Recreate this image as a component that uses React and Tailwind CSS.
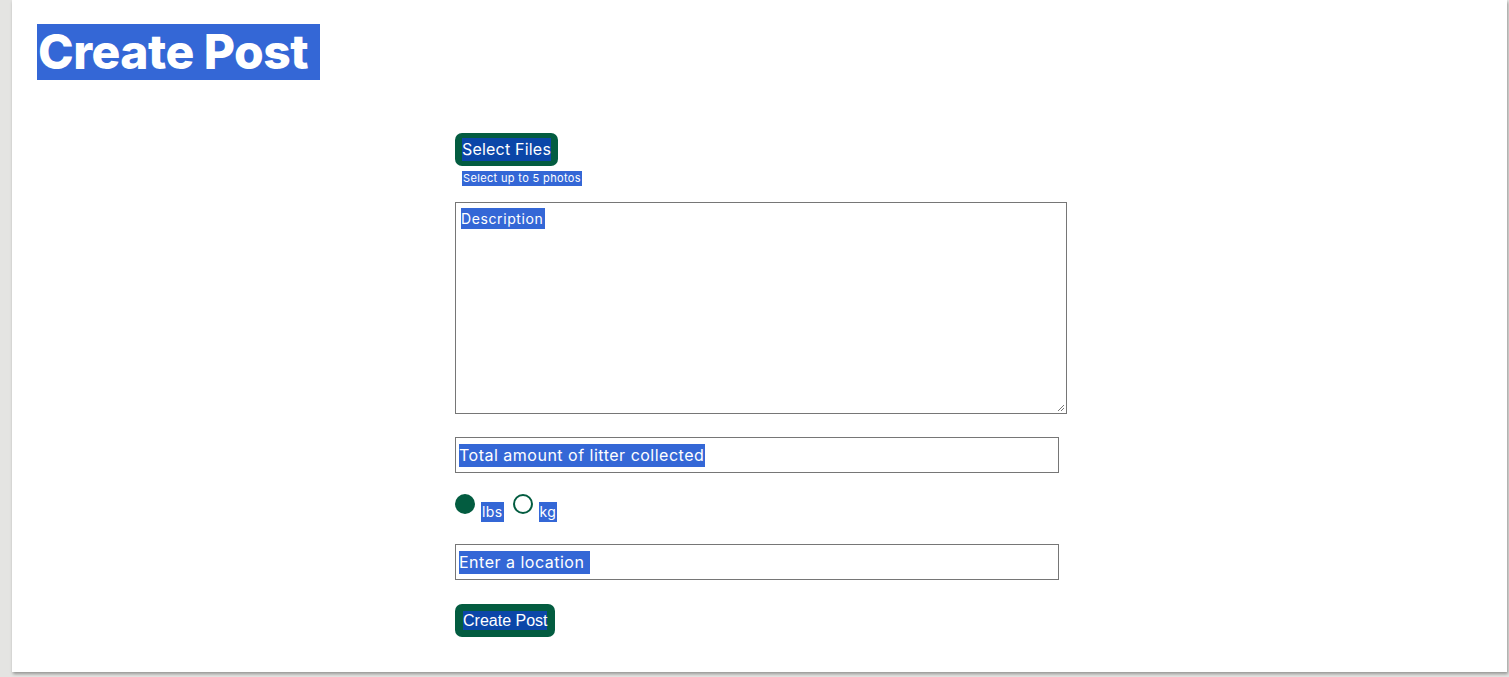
const sel = "bg-[#3467d6] text-white";

function Field({ label, className = "" }) {
  return (
    <div className={`flex items-center border border-[#767676] bg-white pl-[3px] ${className}`}>
      <span className={`${sel} text-[16px] leading-[23px] tracking-[0.5px] pr-[1px]`}>{label}</span>
    </div>
  );
}

function Radio({ checked }) {
  return checked ? (
    <span className="block w-[20px] h-[20px] rounded-full bg-[#035c40]" />
  ) : (
    <span className="block w-[20px] h-[20px] rounded-full border-2 border-[#035c40] bg-white" />
  );
}

export default function App() {
  return (
    <div className="h-[677px] bg-[#e4e4e2] pl-[12px] pr-[2px] font-['Inter','Noto_Sans',sans-serif]">
      <div className="h-[672px] bg-white shadow-[1px_2px_3px_rgba(0,0,0,0.35)]">
        <div className="pt-[24px] pl-[25px]">
          <h1 className="inline-block text-[48px] leading-[56px] font-extrabold tracking-[-0.5px] bg-[#3467d6] text-white pr-[12px] pl-[1px]">
            Create Post
          </h1>
        </div>

        <form className="ml-[443px] mt-[53px] w-[612px] flex flex-col">
          <div>
            <button
              type="button"
              className="h-[33px] px-[7px] rounded-[7px] bg-[#035c40] flex items-center"
            >
              <span className="bg-[#0b46a8] text-white text-[16px] leading-[23px] tracking-[0.2px]">Select Files</span>
            </button>
            <div className="pl-[7px] mt-[5px] h-[15px] flex">
              <span className={`${sel} block text-[11px] leading-[15px] tracking-[0.35px] px-[1px]`}>Select up to 5 photos</span>
            </div>
          </div>

          <div className="relative mt-[16px] h-[212px] border border-[#767676] pt-[5px] pl-[5px]">
            <span className={`${sel} text-[14px] leading-[21px] tracking-[0.6px] pr-[2px] inline-block align-top`}>Description</span>
            <svg className="absolute right-[1px] bottom-[1px]" width="9" height="9" viewBox="0 0 9 9">
              <path d="M8 2 L2 8 M8 5 L5 8" stroke="#767676" strokeWidth="1" />
            </svg>
          </div>

          <Field label="Total amount of litter collected" className="mt-[23px] w-[604px] h-[36px]" />

          <div className="mt-[21px] h-[28px] flex items-start text-[14px] tracking-[0.4px]">
            <Radio checked />
            <span className={`${sel} ml-[6px] mt-[8px] leading-[20px] px-[1px]`}>lbs</span>
            <span className="ml-[9px]">
              <Radio />
            </span>
            <span className={`${sel} ml-[6px] mt-[8px] leading-[20px] px-[1px]`}>kg</span>
          </div>

          <Field label={"Enter a location\u00a0"} className="mt-[22px] w-[604px] h-[36px]" />

          <div className="mt-[24px]">
            <button
              type="button"
              className="h-[33px] px-[8px] rounded-[7px] bg-[#035c40] flex items-center font-['Liberation_Sans',Arial,sans-serif]"
            >
              <span className="bg-[#0b46a8] text-white text-[16px] leading-[19px]">Create Post</span>
            </button>
          </div>
        </form>
      </div>
    </div>
  );
}
